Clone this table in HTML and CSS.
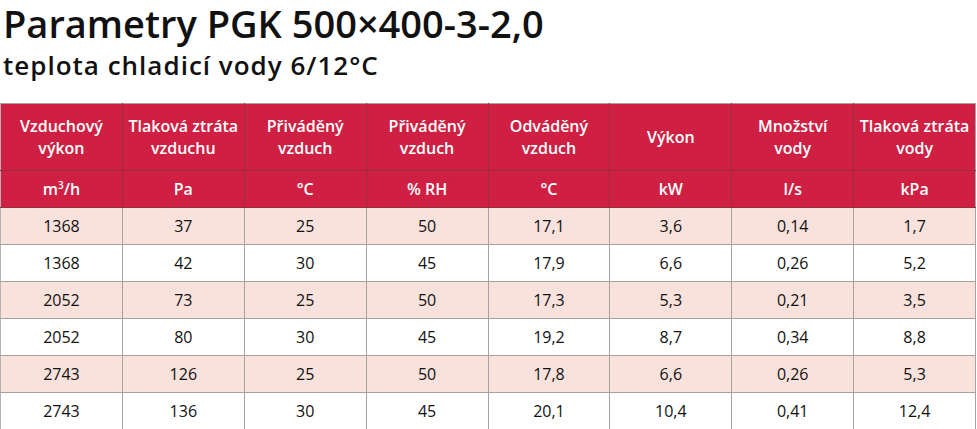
FILE: index.html
```html
<!DOCTYPE html>
<html lang="cs">
<head>
<meta charset="utf-8">
<link rel="stylesheet" href="styles.css">
</head>
<body>
<h1 class="title">Parametry PGK 500×400-3-2,0</h1>
<h2 class="subtitle">teplota chladicí vody 6/12°C</h2>
<table class="params">
  <thead>
    <tr class="head-names">
      <th>Vzduchový<br>výkon</th>
      <th>Tlaková ztráta<br>vzduchu</th>
      <th>Přiváděný<br>vzduch</th>
      <th>Přiváděný<br>vzduch</th>
      <th>Odváděný<br>vzduch</th>
      <th>Výkon</th>
      <th>Množství<br>vody</th>
      <th>Tlaková ztráta<br>vody</th>
    </tr>
    <tr class="head-units">
      <th>m<sup>3</sup>/h</th>
      <th>Pa</th>
      <th>°C</th>
      <th>% RH</th>
      <th>°C</th>
      <th>kW</th>
      <th>l/s</th>
      <th>kPa</th>
    </tr>
  </thead>
  <tbody>
    <tr class="odd"><td>1368</td><td>37</td><td>25</td><td>50</td><td>17,1</td><td>3,6</td><td>0,14</td><td>1,7</td></tr>
    <tr><td>1368</td><td>42</td><td>30</td><td>45</td><td>17,9</td><td>6,6</td><td>0,26</td><td>5,2</td></tr>
    <tr class="odd"><td>2052</td><td>73</td><td>25</td><td>50</td><td>17,3</td><td>5,3</td><td>0,21</td><td>3,5</td></tr>
    <tr><td>2052</td><td>80</td><td>30</td><td>45</td><td>19,2</td><td>8,7</td><td>0,34</td><td>8,8</td></tr>
    <tr class="odd"><td>2743</td><td>126</td><td>25</td><td>50</td><td>17,8</td><td>6,6</td><td>0,26</td><td>5,3</td></tr>
    <tr><td>2743</td><td>136</td><td>30</td><td>45</td><td>20,1</td><td>10,4</td><td>0,41</td><td>12,4</td></tr>
  </tbody>
</table>
</body>
</html>
```

FILE: styles.css
```css
html, body {
  margin: 0;
  padding: 0;
  background: #ffffff;
}
body {
  font-family: "Open Sans", "Liberation Sans", sans-serif;
  color: #111111;
}
.title {
  margin: 0;
  padding: 0 0 0 3px;
  font-size: 38px;
  font-weight: 600;
  line-height: 46px;
  color: #111;
}
.subtitle {
  margin: 0;
  padding: 0 0 0 3px;
  font-size: 26px;
  font-weight: 600;
  line-height: 38px;
  letter-spacing: 1px;
  color: #111;
}
.params {
  margin-top: 19px;
  width: 976px;
  margin-left: 0;
  border-collapse: collapse;
  table-layout: fixed;
}
.params th,
.params td {
  text-align: center;
  vertical-align: middle;
  padding: 0;
  font-size: 16px;
}
.params th {
  background: #cf1f42;
  color: #ffffff;
  font-weight: 600;
  border: 1px solid #9d2b3e;
  line-height: 22px;
}
.params thead tr:first-child th {
  border-top: 1px solid #a8a0a0;
}
.params thead th:first-child,
.params tbody td:first-child {
  border-left: 1px solid #b8b2b2;
}
.params thead th:last-child,
.params tbody td:last-child {
  border-right: 1px solid #a8a0a0;
}
.head-names th {
  height: 66px;
}
.head-units th {
  height: 36px;
}
.head-units sup {
  font-size: 10px;
  line-height: 0;
  vertical-align: 6px;
}
.params td {
  height: 36px;
  border: 1px solid #a8a0a0;
  font-weight: 400;
  color: #111;
}
.params tr.odd td {
  background: #f9e1dc;
}
```
